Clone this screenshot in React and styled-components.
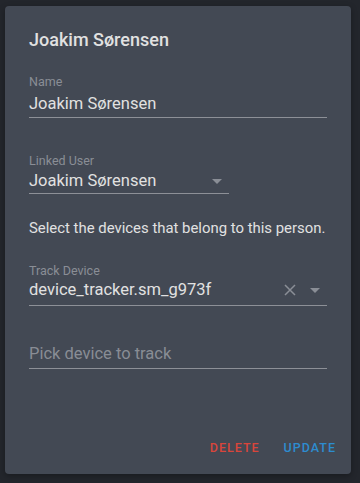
import React from "react";
import styled, { createGlobalStyle } from "styled-components";

const Global = createGlobalStyle`
  html, body { margin: 0; padding: 0; background: #23262c; }
  body { font-family: Roboto, "Noto Sans", sans-serif; -webkit-font-smoothing: antialiased; }
`;

const Page = styled.div`
  padding: 6px 9px 9px 5px;
  background: #23262c;
  min-height: 483px;
  box-sizing: border-box;
`;

const Card = styled.div`
  background: #434954;
  border-radius: 4px;
  height: 468px;
  box-sizing: border-box;
  padding: 22px 24px 0 24px;
  display: flex;
  flex-direction: column;
  box-shadow: 0 2px 6px rgba(0, 0, 0, 0.3);
`;

const Title = styled.h2`
  margin: 0;
  font-size: 18px;
  font-weight: 500;
  line-height: 24px;
  color: #e1e1e1;
`;

const Field = styled.div`
  margin-top: ${(p) => p.$mt}px;
  width: ${(p) => p.$w || "100%"};
  display: flex;
  flex-direction: column;
  border-bottom: 1px solid #8d9097;
  padding-bottom: ${(p) => p.$pb ?? 3}px;
`;

const Label = styled.div`
  font-size: 12.5px;
  line-height: 16px;
  color: #8a8e96;
  margin-bottom: ${(p) => p.$gap ?? 4}px;
`;

const ValueRow = styled.div`
  display: flex;
  align-items: center;
  height: 20px;
`;

const Value = styled.div`
  flex: 1;
  font-size: 16.5px;
  line-height: 20px;
  color: ${(p) => (p.$placeholder ? "#898d95" : "#e1e1e1")};
  white-space: nowrap;
`;

const IconBox = styled.span`
  display: inline-flex;
  align-items: center;
  justify-content: center;
  width: ${(p) => p.$w}px;
  margin-left: ${(p) => p.$ml || 0}px;
  margin-right: ${(p) => p.$mr || 0}px;
`;

const Description = styled.p`
  margin: 24px 0 0 0;
  font-size: 14.9px;
  line-height: 20px;
  color: #e1e1e1;
  white-space: nowrap;
`;

const Actions = styled.div`
  margin-top: auto;
  margin-bottom: 10px;
  margin-right: -17px;
  display: flex;
  justify-content: flex-end;
  gap: 8px;
`;

const Button = styled.button`
  background: none;
  border: none;
  padding: 8px 8px;
  font-family: inherit;
  font-size: 12.5px;
  font-weight: 500;
  letter-spacing: 1px;
  line-height: 16px;
  color: ${(p) => (p.$danger ? "#d9453b" : "#2d8ccf")};
  cursor: pointer;
`;

const Arrow = () => (
  <svg width="10" height="5" viewBox="0 0 10 5">
    <path d="M0 0 L10 0 L5 5 Z" fill="#8a8e96" />
  </svg>
);

const Clear = () => (
  <svg width="12" height="12" viewBox="0 0 12 12">
    <path d="M1 1 L11 11 M11 1 L1 11" stroke="#8a8e96" strokeWidth="1.5" />
  </svg>
);

export default function App() {
  return (
    <>
      <Global />
      <Page>
        <Card>
          <Title>Joakim Sørensen</Title>
          <Field $mt={22} $pb={3}>
            <Label $gap={4}>Name</Label>
            <ValueRow>
              <Value>Joakim Sørensen</Value>
            </ValueRow>
          </Field>
          <Field $mt={35} $w="200px" $pb={2}>
            <Label $gap={2}>Linked User</Label>
            <ValueRow>
              <Value>Joakim Sørensen</Value>
              <IconBox $w={10} $mr={7}>
                <Arrow />
              </IconBox>
            </ValueRow>
          </Field>
          <Description>Select the devices that belong to this person.</Description>
          <Field $mt={25} $pb={5}>
            <Label $gap={1}>Track Device</Label>
            <ValueRow>
              <Value>device_tracker.sm_g973f</Value>
              <IconBox $w={12}>
                <Clear />
              </IconBox>
              <IconBox $w={10} $ml={14} $mr={7}>
                <Arrow />
              </IconBox>
            </ValueRow>
          </Field>
          <Field $mt={38} $pb={4}>
            <ValueRow>
              <Value $placeholder>Pick device to track</Value>
            </ValueRow>
          </Field>
          <Actions>
            <Button $danger>DELETE</Button>
            <Button>UPDATE</Button>
          </Actions>
        </Card>
      </Page>
    </>
  );
}
